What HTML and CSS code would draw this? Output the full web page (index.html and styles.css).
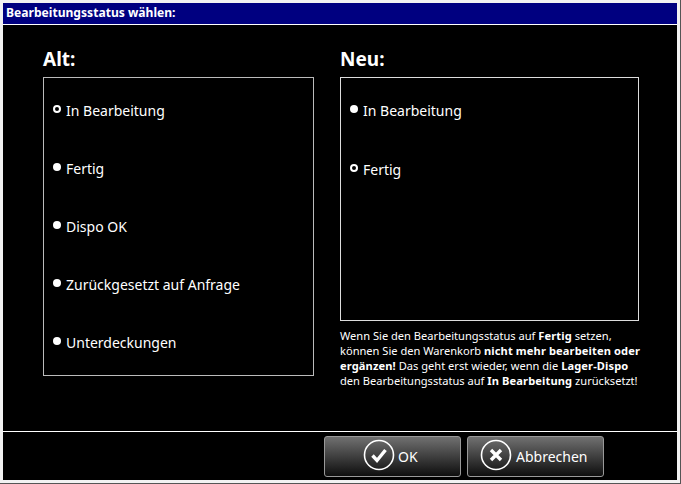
FILE: index.html
```html
<!DOCTYPE html>
<html lang="de">
<head>
<meta charset="utf-8">
<title>Bearbeitungsstatus wählen</title>
<link rel="stylesheet" href="styles.css">
</head>
<body>
<div class="window">
  <div class="titlebar">Bearbeitungsstatus wählen:</div>
  <main class="content">
    <section class="column column-old">
      <h2 class="heading">Alt:</h2>
      <div class="box box-old">
        <div class="option"><span class="radio radio-on"></span><span>In Bearbeitung</span></div>
        <div class="option"><span class="radio"></span><span>Fertig</span></div>
        <div class="option"><span class="radio"></span><span>Dispo OK</span></div>
        <div class="option"><span class="radio"></span><span>Zurückgesetzt auf Anfrage</span></div>
        <div class="option"><span class="radio"></span><span>Unterdeckungen</span></div>
      </div>
    </section>
    <section class="column column-new">
      <h2 class="heading">Neu:</h2>
      <div class="box box-new">
        <div class="option"><span class="radio"></span><span>In Bearbeitung</span></div>
        <div class="option option-second"><span class="radio radio-on"></span><span>Fertig</span></div>
      </div>
      <p class="note">Wenn Sie den Bearbeitungsstatus auf <b>Fertig</b> setzen,<br>können Sie den Warenkorb <b>nicht mehr bearbeiten oder<br>ergänzen!</b> Das geht erst wieder, wenn die <b>Lager-Dispo</b><br>den Bearbeitungsstatus auf <b>In Bearbeitung</b> zurücksetzt!</p>
    </section>
  </main>
  <footer class="footer">
    <button class="btn btn-ok" type="button">
      <svg class="btn-icon" viewBox="0 0 32 32" aria-hidden="true"><circle cx="16" cy="16" r="14.5" fill="none" stroke="#fff" stroke-width="1.6"/><path d="M9.5 16.5l4.5 5 8.5-10.5" fill="none" stroke="#fff" stroke-width="3.4"/></svg>
      <span>OK</span>
    </button>
    <button class="btn btn-cancel" type="button">
      <svg class="btn-icon" viewBox="0 0 32 32" aria-hidden="true"><circle cx="16" cy="16" r="14.5" fill="none" stroke="#fff" stroke-width="1.6"/><path d="M11 11l10 10M21 11l-10 10" fill="none" stroke="#fff" stroke-width="3.4"/></svg>
      <span>Abbrechen</span>
    </button>
  </footer>
</div>
</body>
</html>
```
FILE: styles.css
```css
* { box-sizing: border-box; }
html, body { margin: 0; padding: 0; }
body {
  width: 681px;
  height: 484px;
  overflow: hidden;
  background: #f0f0f0;
  font-family: "Noto Sans", "Open Sans", sans-serif;
  color: #fff;
}
.window {
  width: 681px;
  height: 484px;
  padding: 3px;
  display: flex;
  flex-direction: column;
  background: #f2f2f2;
  border-right: 1px solid #555;
  border-bottom: 1px solid #555;
}
.titlebar {
  height: 22px;
  flex: none;
  background: #000080;
  border-bottom: 1px solid #fff;
  padding-left: 3px;
  font-size: 12.1px;
  font-weight: 700;
  line-height: 20px;
}
.content {
  flex: 1;
  background: #000;
  display: flex;
  padding: 20px 0 0 40px;
}
.column-old { width: 297px; flex: none; }
.column-new { width: 299px; flex: none; }
.heading {
  margin: 0;
  height: 32px;
  font-size: 19px;
  line-height: 28px;
  font-weight: 700;
}
.box {
  border: 1px solid #bbb;
  padding: 21px 0 0 9px;
}
.box-old { width: 271px; height: 299px; }
.box-new { width: 299px; height: 244px; border-color: #ddd; }
.option {
  display: flex;
  align-items: center;
  gap: 5px;
  height: 22px;
  margin-bottom: 36px;
  font-size: 14px;
}
.option-second { margin-top: 37px; }
.radio {
  width: 8px;
  height: 8px;
  border-radius: 50%;
  background: #fff;
  flex: none;
  margin-top: -3px;
}
.radio-on {
  background: #000;
  border: 2px solid #fff;
}
.note {
  margin: 7px 0 0 0;
  font-size: 11.1px;
  line-height: 15px;
  white-space: nowrap;
}
.note b { letter-spacing: 0.12px; }
.footer {
  height: 49px;
  flex: none;
  background: #000;
  border-top: 1px solid #fff;
  display: flex;
  gap: 6px;
  padding: 4px 0 0 321px;
}
.btn {
  width: 137px;
  height: 41px;
  border: 1px solid #999;
  border-radius: 3px;
  background: linear-gradient(#707070, #0e0e0e);
  color: #fff;
  font: inherit;
  font-size: 14px;
  display: flex;
  align-items: center;
  padding: 0;
}
.btn-ok { padding-left: 38px; gap: 3px; }
.btn-cancel { padding-left: 12px; gap: 4px; }
.btn-icon { width: 32px; height: 32px; flex: none; margin-top: -3px; }
```
